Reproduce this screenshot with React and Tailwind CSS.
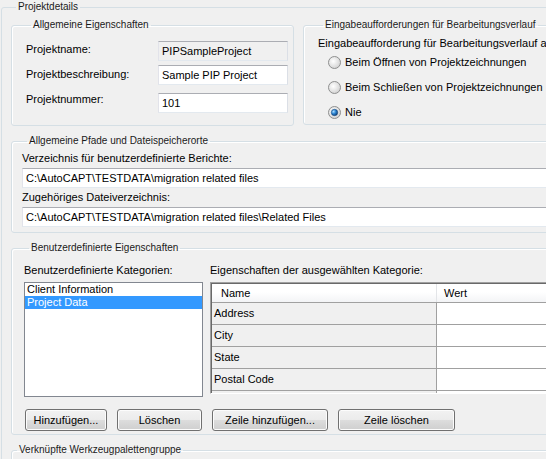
import React from 'react'

function Legend({ children }) {
  return <legend className="ml-[5px] px-[2px] text-[10px] leading-[14px] text-[#1a1a1a]">{children}</legend>
}

function Group({ className = '', children }) {
  return (
    <fieldset className={`border border-[#d5dfe5] rounded-[3px] shadow-[inset_1px_1px_0_#ffffff] min-w-0 ${className}`}>
      {children}
    </fieldset>
  )
}

function TextBox({ value, readOnly, className = '' }) {
  return (
    <div
      className={`h-[20px] border border-[#abadb3] border-l-[#e2e3ea] border-r-[#dbdfe6] border-b-[#e3e9ef] px-[3px] flex items-center leading-[14px] whitespace-nowrap overflow-hidden ${readOnly ? 'bg-[#f0f0f0]' : 'bg-white'} ${className}`}
    >
      {value}
    </div>
  )
}

function Radio({ checked, label, className = '' }) {
  return (
    <div className={`flex items-center h-[14px] ml-[10px] gap-[4px] ${className}`}>
      <svg width="13" height="13" viewBox="0 0 13 13" className="shrink-0">
        <defs>
          <radialGradient id="rg" cx="0.4" cy="0.4" r="0.6">
            <stop offset="0" stopColor="#ffffff" />
            <stop offset="1" stopColor="#d4d4d4" />
          </radialGradient>
          <radialGradient id="dot" cx="0.35" cy="0.35" r="0.7">
            <stop offset="0" stopColor="#a8dcff" />
            <stop offset="0.5" stopColor="#2a83d1" />
            <stop offset="1" stopColor="#0d3c74" />
          </radialGradient>
        </defs>
        <circle cx="6.5" cy="6.5" r="6" fill="url(#rg)" stroke="#8e8f8f" strokeWidth="1" />
        {checked && <circle cx="6.5" cy="6.5" r="3.2" fill="url(#dot)" stroke="#1a4a80" strokeWidth="0.6" />}
      </svg>
      <span className="whitespace-nowrap">{label}</span>
    </div>
  )
}

function Button({ children, w }) {
  return (
    <div
      className={`${w} h-[22px] border border-[#707070] rounded-[3px] bg-[linear-gradient(#f2f2f2,#ebebeb_50%,#dddddd_50%,#cfcfcf)] shadow-[inset_0_0_0_1px_#fcfcfc] flex items-center justify-center leading-[14px] whitespace-nowrap`}
    >
      {children}
    </div>
  )
}

const rows = ['Address', 'City', 'State', 'Postal Code', '']

export default function App() {
  return (
    <div className="w-[546px] h-[459px] overflow-hidden bg-[#f0f0f0] font-['Liberation_Sans',Arial,sans-serif] text-[11px] text-black">
      <fieldset className="w-[700px] ml-[1px] border border-[#d5dfe5] rounded-[3px] pl-[9px] pb-[20px] min-w-0">
        <Legend>Projektdetails</Legend>

        <div className="flex items-start gap-[9px] mt-[4px]">
          <Group className="w-[283px] pt-[9px] pb-[12px] pl-[14px]">
            <Legend>Allgemeine Eigenschaften</Legend>
            <div className="flex items-start h-[20px]">
              <span className="w-[132px] leading-[14px] mt-[1px]">Projektname:</span>
              <TextBox value="PIPSampleProject" readOnly className="w-[130px]" />
            </div>
            <div className="flex items-start h-[20px] mt-[4px]">
              <span className="w-[132px] leading-[14px] mt-[2px]">Projektbeschreibung:</span>
              <TextBox value="Sample PIP Project" className="w-[130px]" />
            </div>
            <div className="flex items-start h-[20px] mt-[8px]">
              <span className="w-[132px] leading-[14px] mt-[-1px]">Projektnummer:</span>
              <TextBox value="101" className="w-[130px]" />
            </div>
          </Group>

          <Group className="w-[300px] pt-[4px] pb-[5px] pl-[14px]">
            <Legend>Eingabeaufforderungen für Bearbeitungsverlauf</Legend>
            <div className="leading-[14px] whitespace-nowrap">Eingabeaufforderung für Bearbeitungsverlauf anzeigen</div>
            <Radio label="Beim Öffnen von Projektzeichnungen" className="mt-[5px]" />
            <Radio label="Beim Schließen von Projektzeichnungen" className="mt-[11px]" />
            <Radio label="Nie" checked className="mt-[11px]" />
          </Group>
        </div>

        <Group className="mt-[8px] pt-[3px] pb-[5px] pl-[10px]">
          <Legend>Allgemeine Pfade und Dateispeicherorte</Legend>
          <div className="leading-[14px]">Verzeichnis für benutzerdefinierte Berichte:</div>
          <TextBox value="C:\AutoCAPT\TESTDATA\migration related files" className="mt-[3px] w-[660px]" />
          <div className="leading-[14px] mt-[2px]">Zugehöriges Dateiverzeichnis:</div>
          <TextBox value="C:\AutoCAPT\TESTDATA\migration related files\Related Files" className="mt-[3px] w-[660px]" />
        </Group>

        <Group className="mt-[8px] pt-[8px] pb-[3px] pl-[12px]">
          <Legend>Benutzerdefinierte Eigenschaften</Legend>
          <div className="flex items-start">
            <div className="w-[186px] shrink-0">
              <div className="leading-[14px]">Benutzerdefinierte Kategorien:</div>
              <div className="mt-[5px] w-[179px] h-[115px] border border-[#828790] bg-white">
                <div className="leading-[13px] pl-[2px]">Client Information</div>
                <div className="leading-[13px] pl-[2px] bg-[#3399ff] text-white">Project Data</div>
              </div>
            </div>
            <div className="w-[420px] shrink-0">
              <div className="leading-[14px]">Eigenschaften der ausgewählten Kategorie:</div>
              <div className="mt-[5px] h-[112px] border-t border-l border-[#a0a0a0] border-r-white border-b-white border-r border-b overflow-hidden">
                <div className="h-full border-t border-l border-[#696969] overflow-hidden">
                  <div className="flex h-[19px] border-b border-[#a0a0a0] bg-[linear-gradient(#ffffff,#ffffff_45%,#f3f4f6)]">
                    <div className="w-[225px] border-r border-[#e3e5e8] pl-[9px] flex items-center">Name</div>
                    <div className="flex-1 pl-[7px] flex items-center">Wert</div>
                  </div>
                  {rows.map((r, i) => (
                    <div key={i} className="flex h-[22px] border-b border-[#a0a0a0]">
                      <div className="w-[225px] border-r border-[#a0a0a0] bg-[#f0f0f0] pl-[2px] flex items-center">{r}</div>
                      <div className="flex-1 bg-white" />
                    </div>
                  ))}
                </div>
              </div>
            </div>
          </div>
          <div className="flex gap-[10px] mt-[12px] ml-[1px]">
            <Button w="w-[82px]">Hinzufügen...</Button>
            <Button w="w-[85px]">Löschen</Button>
            <Button w="w-[116px]">Zeile hinzufügen...</Button>
            <Button w="w-[117px]">Zeile löschen</Button>
          </div>
        </Group>

        <Group className="mt-[8px] h-[60px]">
          <Legend>Verknüpfte Werkzeugpalettengruppe</Legend>
        </Group>
      </fieldset>
    </div>
  )
}
